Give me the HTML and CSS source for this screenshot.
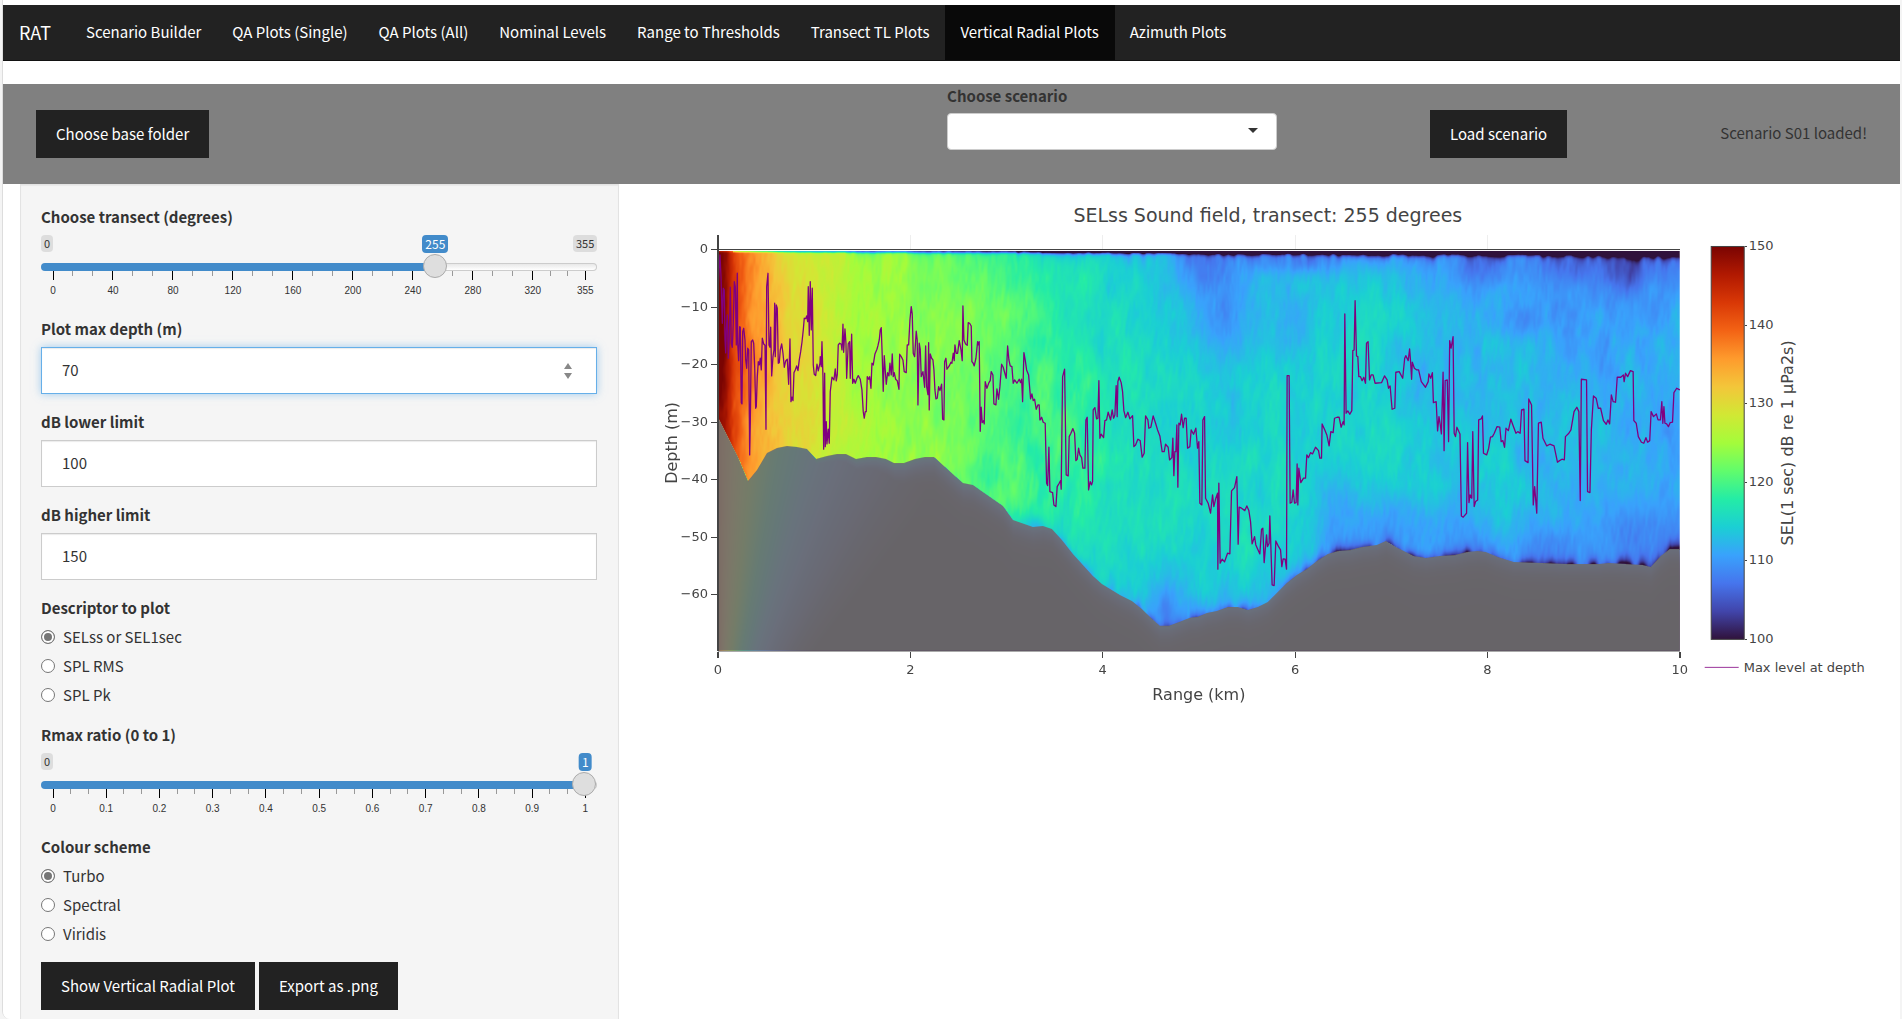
FILE: index.html
```html
<!DOCTYPE html>
<html lang="en">
<head>
    <meta charset="UTF-8">
    <meta name="viewport" content="width=device-width, initial-scale=1.0">
    <title>RAT</title>
    <link rel="stylesheet" href="styles.css">
</head>
<body>
    <div class="page">
        <div class="strip"><span>page</span></div>

        <nav class="navbar">
            <a class="brand" href="#">RAT</a>
            <a href="#">Scenario Builder</a>
            <a href="#">QA Plots (Single)</a>
            <a href="#">QA Plots (All)</a>
            <a href="#">Nominal Levels</a>
            <a href="#">Range to Thresholds</a>
            <a href="#">Transect TL Plots</a>
            <a class="active" href="#">Vertical Radial Plots</a>
            <a href="#">Azimuth Plots</a>
        </nav>

        <div class="bar">
            <button class="btn" type="button">Choose base folder</button>
            <div class="bar-field">
                <label for="scenario">Choose scenario</label>
                <div class="select-wrap">
                    <select id="scenario"><option value=""></option></select>
                </div>
            </div>
            <button class="btn" type="button">Load scenario</button>
            <span class="status">Scenario S01 loaded!</span>
        </div>

        <div class="row">
            <form class="sidebar">
                <div class="group">
                    <label for="transect">Choose transect (degrees)</label>
                    <div class="slider" style="--pos: 0.7183">
                        <div class="badges"><span>0</span><span>355</span></div>
                        <output class="bubble" for="transect">255</output>
                        <input type="range" id="transect" min="0" max="355" step="5" value="255">
                        <svg class="ruler" data-ticks="0 40 80 120 160 200 240 280 320 355"></svg>
                    </div>
                </div>

                <div class="group">
                    <label for="depth">Plot max depth (m)</label>
                    <div class="number-wrap">
                        <input class="focused" type="number" id="depth" value="70">
                        <svg class="spinner" width="8" height="16" viewBox="0 0 8 16">
                            <path d="M4 0 L8 6 H0 Z M0 10 H8 L4 16 Z" fill="#888"/>
                        </svg>
                    </div>
                </div>

                <div class="group">
                    <label for="dbLow">dB lower limit</label>
                    <input type="number" id="dbLow" value="100">
                </div>

                <div class="group">
                    <label for="dbHigh">dB higher limit</label>
                    <input type="number" id="dbHigh" value="150">
                </div>

                <fieldset>
                    <legend>Descriptor to plot</legend>
                    <label class="radio"><input type="radio" name="descriptor" checked> SELss or SEL1sec</label>
                    <label class="radio"><input type="radio" name="descriptor"> SPL RMS</label>
                    <label class="radio"><input type="radio" name="descriptor"> SPL Pk</label>
                </fieldset>

                <div class="group">
                    <label for="rmax">Rmax ratio (0 to 1)</label>
                    <div class="slider" style="--pos: 1">
                        <div class="badges"><span>0</span></div>
                        <output class="bubble" for="rmax">1</output>
                        <input type="range" id="rmax" min="0" max="1" step="0.1" value="1">
                        <svg class="ruler" data-ticks="0 0.1 0.2 0.3 0.4 0.5 0.6 0.7 0.8 0.9 1"></svg>
                    </div>
                </div>

                <fieldset>
                    <legend>Colour scheme</legend>
                    <label class="radio"><input type="radio" name="scheme" checked> Turbo</label>
                    <label class="radio"><input type="radio" name="scheme"> Spectral</label>
                    <label class="radio"><input type="radio" name="scheme"> Viridis</label>
                </fieldset>

                <div class="actions">
                    <button class="btn" type="button">Show Vertical Radial Plot</button>
                    <button class="btn" type="button">Export as .png</button>
                </div>
            </form>

            <main class="plot">
                <svg id="chart" viewBox="0 0 1231 540">
                    <defs>
                        <linearGradient id="turbo" x1="0" y1="1" x2="0" y2="0"></linearGradient>
                    </defs>
                    <text class="title" x="616" y="38" text-anchor="middle">SELss Sound field, transect: 255 degrees</text>
                    <g id="grid"></g>
                    <foreignObject x="66" y="67" width="962" height="400">
                        <canvas id="field" width="962" height="400"></canvas>
                    </foreignObject>
                    <path id="seabed" fill="#6e6e6e" fill-opacity="0.9"/>
                    <path id="maxLevel"/>
                    <g id="axes"></g>
                    <text class="axis-title" x="547" y="516" text-anchor="middle">Range (km)</text>
                    <text class="axis-title" transform="translate(25 259) rotate(-90)" text-anchor="middle">Depth (m)</text>
                    <rect x="1059.5" y="62.5" width="33" height="393" fill="url(#turbo)" stroke="#444"/>
                    <g id="barTicks"></g>
                    <text class="axis-title" transform="translate(1141 259) rotate(-90)" text-anchor="middle">SEL(1 sec) dB re 1 µPa2s)</text>
                    <path d="M1053 483.5 H1087" stroke="#800080" stroke-opacity="0.8"/>
                    <text class="tick" x="1092" y="488">Max level at depth</text>
                </svg>
            </main>
        </div>
    </div>

    <script src="plot.js"></script>
</body>
</html>
```

FILE: styles.css
```css
* {
    box-sizing: border-box;
}

body {
    margin: 0;
    background-color: #f4f4f4;
    font-family: "Noto Sans CJK SC", "Noto Sans", sans-serif;
    font-size: 15px;
    line-height: 24px;
    color: #333;
}

.page {
    height: 100vh;
    margin: 0 2px;
    border-left: 1px solid #ddd;
    border-bottom-left-radius: 8px;
    background-color: #fff;
    overflow-y: auto;
    scrollbar-width: none;
}

.strip {
    display: flex;
    align-items: flex-end;
    height: 5px;
    padding: 0 40px 3px;
    overflow: hidden;
}

/* top navigation */
.navbar {
    display: flex;
    height: 56px;
    padding-left: 1px;
    background-color: #222;
    border-bottom: 1px solid #121212;
}

.navbar a {
    padding: 0 16px 0 15px;
    line-height: 54px;
    color: #fff;
    text-decoration: none;
    white-space: nowrap;
}

.navbar .brand {
    font-size: 18px;
    padding-right: 20px;
}

.navbar .active {
    background-color: #090909;
}

/* scenario bar */
.bar {
    display: flex;
    align-items: center;
    gap: 153px;
    height: 100px;
    margin-top: 23px;
    padding: 0 33px;
    background-color: #808080;
}

.bar-field {
    align-self: flex-start;
    width: 330px;
    margin-left: auto;
}

.status {
    padding-bottom: 2px;
    white-space: nowrap;
}

label,
legend {
    display: block;
    padding: 0;
    font-weight: 700;
}

.btn {
    height: 48px;
    padding: 0 20px 2px;
    border: 0;
    background-color: #222;
    color: #fff;
    font-family: inherit;
    font-size: 15px;
    white-space: nowrap;
}

.select-wrap {
    position: relative;
    margin-top: 5px;
}

.select-wrap::after {
    content: "";
    position: absolute;
    right: 19px;
    top: 15px;
    border: 5px solid transparent;
    border-top-color: #333;
    border-bottom: 0;
    pointer-events: none;
}

select {
    display: block;
    width: 100%;
    height: 37px;
    border: 1px solid #ccc;
    border-radius: 4px;
    background-color: #fff;
    appearance: none;
}

/* main row */
.row {
    display: grid;
    grid-template-columns: 1fr 2fr;
    align-items: start;
}

.sidebar {
    margin: 0 16px 0 17px;
    padding: 20px 21px 20px 20px;
    border: 1px solid #e3e3e3;
    background-color: #f5f5f5;
    box-shadow: inset 0 1px 1px rgba(0, 0, 0, 0.05);
}

.group {
    margin-bottom: 16px;
}

fieldset {
    margin: 0 0 16px;
    padding: 0;
    border: 0;
}

input[type="number"] {
    display: block;
    width: 100%;
    height: 47px;
    margin-top: 6px;
    padding: 0 20px 2px;
    border: 1px solid #ccc;
    background-color: #fff;
    box-shadow: inset 0 1px 1px rgba(0, 0, 0, 0.08);
    color: #333;
    font-family: inherit;
    font-size: 15px;
    appearance: textfield;
}

input[type="number"].focused {
    border-color: #66afe9;
    box-shadow: inset 0 1px 1px rgba(0, 0, 0, 0.08), 0 0 8px rgba(102, 175, 233, 0.6);
}

.number-wrap {
    position: relative;
}

.spinner {
    position: absolute;
    right: 25px;
    top: 16px;
}

.radio {
    display: flex;
    align-items: center;
    gap: 8px;
    margin-top: 5px;
    font-weight: 400;
}

.radio input {
    width: 14px;
    height: 14px;
    margin: 0;
    border: 1px solid #767676;
    border-radius: 50%;
    background-color: #fff;
    appearance: none;
}

.radio input:checked {
    background-color: #767676;
    box-shadow: inset 0 0 0 2px #fff;
}

.actions {
    display: flex;
    gap: 4px;
}

/* sliders */
.slider {
    position: relative;
    margin-top: 6px;
}

.badges {
    display: flex;
    justify-content: space-between;
    height: 17px;
}

.badges span {
    padding: 0 3px;
    border-radius: 4px;
    background-color: #ddd;
    font-size: 11px;
    line-height: 16px;
}

.bubble {
    position: absolute;
    top: 0;
    left: calc(12px + (100% - 24px) * var(--pos));
    padding: 0 3px;
    border-radius: 4px;
    background-color: #428bca;
    color: #fff;
    font-size: 12px;
    line-height: 18px;
    transform: translateX(-50%);
}

input[type="range"] {
    position: relative;
    z-index: 1;
    display: block;
    width: 100%;
    height: 24px;
    margin: 3px 0 0;
    background: none;
    appearance: none;
}

input[type="range"]::-webkit-slider-runnable-track {
    height: 8px;
    border: 1px solid transparent;
    border-radius: 8px;
    background:
        linear-gradient(#428bca, #428bca) 0 0 / calc(12px + (100% - 24px) * var(--pos)) 100% no-repeat border-box,
        linear-gradient(#e8e8e8, #fff) padding-box,
        linear-gradient(#ccc, #ccc) border-box;
}

input[type="range"]::-webkit-slider-thumb {
    width: 24px;
    height: 24px;
    margin-top: -10px;
    border: 1px solid #ababab;
    border-radius: 50%;
    background-color: #dedede;
    appearance: none;
}

.ruler {
    display: block;
    width: calc(100% - 24px);
    height: 30px;
    margin: -8px 12px 0;
    overflow: visible;
    font-family: "Liberation Sans", Arial, sans-serif;
    font-size: 10px;
}

/* plot */
.plot {
    padding: 0 17px;
    min-width: 0;
}

#chart {
    display: block;
    width: 100%;
    font-family: "DejaVu Sans", Verdana, sans-serif;
    fill: #444;
}

#field {
    display: block;
}

#maxLevel {
    fill: none;
    stroke: #800080;
    stroke-width: 1.3;
    stroke-linejoin: round;
}

.title {
    font-size: 19px;
}

.axis-title {
    font-size: 16px;
}

.tick {
    font-size: 13px;
}

#grid,
#axes,
#barTicks,
.ruler {
    shape-rendering: crispEdges;
}
```

FILE: plot.js
```js
const NS = "http://www.w3.org/2000/svg";

function add(parent, name, attrs, text) {
    const el = document.createElementNS(NS, name);
    for (const key in attrs) {
        el.setAttribute(key, attrs[key]);
    }
    if (text !== undefined) {
        el.textContent = text;
    }
    parent.appendChild(el);
}

function line(parent, x1, y1, x2, y2, color, width) {
    add(parent, "line", { x1, y1, x2, y2, stroke: color, "stroke-width": width || 1 });
}

// slider rulers: a long tick per label, two short ones in between
document.querySelectorAll(".ruler").forEach(function (ruler) {
    const ticks = ruler.dataset.ticks.split(" ").map(Number);
    const max = ticks[ticks.length - 1];
    ticks.forEach(function (t, i) {
        const x = t / max * 100;
        line(ruler, x + "%", 0, x + "%", 9, "#000");
        add(ruler, "text", { x: x + "%", y: 23, "text-anchor": "middle", fill: "#333" }, t);
        if (i < ticks.length - 1) {
            const step = (ticks[i + 1] - t) / max * 100 / 3;
            for (let k = 1; k < 3; k++) {
                const sx = x + step * k + "%";
                line(ruler, sx, 0, sx, 5, "#999");
            }
        }
    });
});

// plot scales
const LEFT = 66, RIGHT = 1028, TOP = 51, BOTTOM = 467, ZERO = 65.5;
const KM = 96.2, METRE = 5.75;

const stops = [
    "30123b", "4145ab", "4675ed", "39a2fc", "1bcfd4", "24eca6", "61fc6c", "a4fc3b",
    "d1e834", "f3c63a", "fe9b2d", "f36315", "d93806", "b11901", "7a0402"
].map((hex) => [0, 2, 4].map((i) => parseInt(hex.substr(i, 2), 16)));

function turbo(t) {
    const pos = Math.max(0, Math.min(0.9999, t)) * (stops.length - 1);
    const i = Math.floor(pos), f = pos - i;
    return stops[i].map((c, k) => Math.round(c + (stops[i + 1][k] - c) * f));
}

const gradient = document.getElementById("turbo");
stops.forEach(function (c, i) {
    add(gradient, "stop", { offset: i / (stops.length - 1), "stop-color": `rgb(${c})` });
});

// seabed profile, chart coordinates
const bed = [
    [66, 233], [86, 273], [96, 297], [105, 286], [115, 269], [125, 264], [135, 262], [145, 263],
    [155, 265], [164, 275], [175, 272], [185, 270], [194, 270], [204, 275], [215, 273], [224, 273],
    [234, 275], [242, 279], [252, 279], [263, 275], [273, 273], [282, 273], [292, 282], [303, 292],
    [311, 299], [321, 301], [328, 306], [351, 322], [361, 336], [381, 343], [391, 342], [400, 345],
    [410, 356], [421, 370], [431, 381], [441, 392], [450, 400], [468, 411], [480, 417], [490, 425],
    [500, 435], [508, 442], [517, 442], [528, 438], [538, 434], [546, 433], [555, 429], [565, 427],
    [576, 423], [586, 423], [596, 426], [606, 423], [616, 418], [625, 409], [635, 399], [645, 391],
    [655, 385], [665, 377], [676, 370], [686, 367], [698, 366], [710, 363], [725, 361], [734, 357],
    [746, 364], [762, 372], [774, 374], [788, 372], [803, 371], [815, 368], [826, 367], [834, 368],
    [846, 373], [862, 378], [891, 379], [915, 380], [947, 380], [957, 379], [991, 381], [999, 383],
    [1009, 372], [1018, 365], [1028, 365]
];
document.getElementById("seabed").setAttribute("d",
    "M" + bed.map((p) => p.join(" ")).join("L") + `L${RIGHT} ${BOTTOM}L${LEFT} ${BOTTOM}Z`);

function lookup(points, x) {
    for (let i = 1; i < points.length; i++) {
        if (x <= points[i][0]) {
            const a = points[i - 1], b = points[i];
            return a[1] + (b[1] - a[1]) * (x - a[0]) / (b[0] - a[0]);
        }
    }
    return points[points.length - 1][1];
}

// smooth value noise
function hash(x, y) {
    let h = Math.imul(x, 374761393) + Math.imul(y, 668265263) | 0;
    h = Math.imul(h ^ (h >>> 13), 1274126177);
    return ((h ^ (h >>> 16)) >>> 0) / 4294967296 - 0.5;
}

function noise(x, y) {
    const xi = Math.floor(x), yi = Math.floor(y);
    let u = x - xi, v = y - yi;
    u = u * u * (3 - 2 * u);
    v = v * v * (3 - 2 * v);
    const top = hash(xi, yi) * (1 - u) + hash(xi + 1, yi) * u;
    const bottom = hash(xi, yi + 1) * (1 - u) + hash(xi + 1, yi + 1) * u;
    return top * (1 - v) + bottom * v;
}

// level by range in km, dB
const levels = [
    [0, 151], [0.08, 148], [0.16, 142], [0.3, 137.5], [0.5, 134], [0.7, 131.5], [0.9, 129.5],
    [1.1, 127.5], [1.4, 126.2], [1.8, 124.8], [2.2, 123.5], [2.7, 121.8], [3.1, 119.8], [3.5, 118.3],
    [4, 117], [4.5, 116], [5, 115], [6, 115], [6.8, 115], [7.3, 114], [8, 113.2], [9, 112.4], [10, 112]
];

// local patches: km, depth, km radius, depth radius, dB
const patches = [
    [5, 3, 0.35, 4, -3.5], [5.2, 8, 0.3, 9, -3], [5.3, 14, 0.5, 6, -1.2], [6, 13, 0.25, 6, -1.6], [6, 2, 0.4, 2, -3.5],
    [7.9, 3, 0.25, 4, -4], [8.35, 12, 0.25, 3, -3], [9, 3, 0.5, 3, -2.5], [9.45, 4, 0.2, 4, -4.5],
    [6.8, 10, 0.4, 10, 1], [4.65, 62, 0.2, 5, -5], [4.6, 56, 0.3, 4, -1.5], [7, 48, 0.7, 5, -3],
    [6.5, 44, 0.25, 7, -1.8], [9.5, 49, 0.4, 5, -2.5], [3.6, 28, 0.5, 12, 0.8], [3.2, 42, 0.25, 6, 1.5],
    [2.8, 39, 0.15, 3, -3], [3.25, 48, 0.12, 2, -4], [8.6, 51, 0.4, 3, -2.5], [8, 38, 0.5, 9, 1]
];

function level(km, depth, bedDepth, x, y) {
    let v = lookup(levels, km);
    if (depth > bedDepth) {
        const reach = 0.32 + (70 - depth) * 0.015;
        const spread = 42 * Math.exp(-km / reach) - 2;
        const edge = (v - 100) * 0.6 * Math.exp(-(depth - bedDepth) / 1.5);
        return 100 + Math.max(spread, edge);
    }
    const far = Math.min(1, Math.max(0, (km - 3) / 3));
    const slant = x + y * 0.15;
    const wide = noise(x / 34, y / 60 + 9);
    const mid = noise(slant / 9, y / 34) + noise((x - y * 0.2) / 11 + 50, y / 30);
    const fine = noise(slant / 3 + 90, y / 13) + noise(x / 2 + 300, y / 9);
    v += wide * 2.2 + mid * 1.6 + fine * 1;
    v -= far * 3.2 * Math.exp(-depth / 15);
    // loss under the surface
    const ragged = Math.max(0.1, 1 + 1.6 * (noise(x / 5, 3) + noise(x / 17, 7)));
    const skin = 0.12 + 0.065 * km * (0.7 + 0.3 * ragged);
    const below = Math.max(0, depth - 0.3);
    v -= (12 + km * 1.2) * Math.exp(-Math.pow(below / skin, 1.5)) * (km < 0.15 ? 0.3 : 1);
    v -= 5 * Math.min(1, km / 3) * ragged * Math.exp(-depth / (0.8 + 0.1 * km));
    // loss over the seabed
    const gap = bedDepth - depth;
    const rough = 1 + noise(x / 7, 20) * 1.8;
    if (km > 2.2) {
        const k = Math.min(1, (km - 2.2) / 3);
        v -= k * (3.5 * Math.exp(-gap / 4.5) + (2.5 + km * 0.45) * rough * Math.exp(-gap / 0.9));
    }
    for (const p of patches) {
        const a = (km - p[0]) / p[2], b = (depth - p[1]) / p[3];
        const r = a * a + b * b;
        if (r < 6) {
            v += p[4] * Math.exp(-r) * (1 + mid * 0.8);
        }
    }
    return v;
}

const canvas = document.getElementById("field");
const ctx = canvas.getContext("2d");
const image = ctx.createImageData(canvas.width, canvas.height);
for (let x = 0; x < canvas.width; x++) {
    const km = x / KM;
    const bedDepth = (lookup(bed, x + LEFT) - ZERO) / METRE;
    for (let y = 0; y < canvas.height; y++) {
        const depth = (y + 1.5) / METRE;
        const rgb = turbo((level(km, depth, bedDepth, x, y) - 100) / 50);
        image.data.set([...rgb, 255], (y * canvas.width + x) * 4);
    }
}
ctx.putImageData(image, 0, 0);

const runs = [
    [-12, 3, "234,300 238,230 240,195 243,260 247,400 250,295 253,300 255,450 257,489 259,420 262,375 265,505 268,440 271,292 274,460 277,472 280,400 283,275 286,290 289,465 292,250 293,460 296,512 299,410 301,412 304,638 306,642 308,425 311,415 315,450 317,510 320,535 323,475 326,480 329,795 331,700 334,455 338,450 341,460 344,530 347,655 349,650 352,560 355,515 358,525 361,505 364,540 367,445 371,462 375,466 378,718 380,290 384,250 387,465 390,472 392,412 395,558 399,500 402,480 404,340 406,500 409,345 412,355 415,520 418,518 421,480 425,462 429,490 433,532 437,513 442,508 446,583 450,447 453,635 456,622 459,632 462,548 466,540 470,528 474,542 478,510 482,485 486,457 490,420 493,385 497,386 500,378 503,395 505,290 508,436 511,275 514,420 517,295 520,525 523,553 527,557 531,523 535,543 540,520 541,500 544,530 546,455 549,560 551,778 554,550 556,770 559,695 561,762 565,718 568,760 571,605 576,562 582,570 586,537 589,573 592,555 595,465 599,460 604,463 606,480 609,403 611,487 615,417 618,460 620,565 625,462 629,455 631,565 635,433 638,580 642,568 646,580 651,565 655,557 661,568 666,600 670,665 673,685 676,665 679,665 682,560 686,568 689,560 693,595 696,520 700,525 705,492 711,478 714,467 718,450 721,420 724,413 727,500 730,604 733,497 739,583 743,548 747,558 750,520 754,555 757,492 760,560 763,548 767,568 772,572 777,598 779,493 784,500 789,510 793,545 799,548 802,465 806,465 810,390 814,350 817,372 820,490 824,500 829,424 832,450 834,645 838,460 841,478 844,560 849,545 854,592 857,468 860,590 864,614 866,458 868,660 871,492 875,505 879,510 882,540 885,600 888,627 892,625 896,590 900,602 905,583 908,688 912,690 914,515 918,505 921,538 928,528 933,517 936,520 940,490 943,512 945,465 949,490 953,490 958,452 963,478 967,512 969,348 972,450 977,462 982,466 985,398 989,400 994,408 996,515 1000,520 1003,528 1008,505 1013,455 1015,465 1018,455 1021,724 1024,652 1027,698 1031,692 1033,702 1036,575 1041,595 1047,578 1051,572 1054,545 1059,555 1062,642 1068,645 1071,597 1076,628 1080,590 1085,523 1090,532 1099,565 1103,468 1107,510 1111,528 1116,530 1120,580 1124,570 1131,580 1138,568 1142,578 1145,568 1148,635 1152,488 1156,510 1160,540 1166,555 1172,627 1176,612 1180,632 1184,628 1189,658 1194,645 1198,645 1200,690"],
    [348, 3, "121,690 125,682 130,697 136,700 140,880 143,887 147,772 150,905 158,908 162,945 168,950 172,890 178,880 182,872 184,898 188,560 194,538 199,855 205,858 208,740 213,730 219,716 224,730 228,812 232,808 236,775 240,795 245,803 249,835 255,835 258,690 262,682 266,900 271,875 275,885 278,875 280,660 285,653 290,687 294,685 297,572 300,745 304,733 311,743 315,692 320,690 325,667 332,690 337,660 341,685 345,675 349,587 352,680 354,575 358,562 364,578 368,605 372,662 377,683 384,667 390,687 398,677 402,770 407,765 414,748 421,752 427,802 433,790 437,678 444,690 447,715 453,712 460,678 467,700 473,720 480,738 487,785 493,785 497,763 505,772 509,810 516,803 519,745 522,857 525,785 528,785 531,705 534,892 537,700 541,705 545,673 550,713 554,685 559,685 563,775 570,770 574,720 581,733 588,715 593,775 597,755 600,940 606,945 609,690 614,680 617,925 625,940 632,970 638,915 642,950 648,925 653,910 654,1138 657,880 661,1120 667,1108 674,1116 683,1090 690,1092 695,903 704,893 711,860 715,1063 718,952 725,955 735,962 741,948 747,962 752,995 757,1062 764,1040 768,1065 780,1092 785,1018 789,1015 793,1118 800,1035 803,1070 808,1060 810,978 817,1185 823,1187 828,1053 835,1068 842,1080 846,1130 850,1107 856,1108 860,1138 862,557 868,557 871,940 876,937 880,900 884,940 889,938 892,822 894,945 897,835 903,878 911,865 917,865 921,795 926,803 932,788 938,792 947,772 956,782 960,805 965,805 967,702 975,720 981,735 988,768 993,725 1000,728 1004,685 1012,682 1018,682 1024,712 1030,695 1033,705 1035,372 1039,670 1044,663 1050,673 1056,662 1059,482 1063,480 1066,332 1070,498 1074,500 1077,560 1082,560 1087,572 1092,562 1097,580 1100,460 1105,455 1109,570 1114,555 1120,555 1126,580 1145,578 1154,558 1162,570 1166,595 1171,588 1177,658 1185,655 1188,547"],
    [708, 2.893, "105,547 114,545 124,565 130,505 133,497 140,512 144,477 147,515 150,568 152,517 158,535 165,540 170,540 178,575 190,592 198,575 200,552 205,565 210,548 213,638 221,635 225,723 229,680 233,705 236,732 241,547 244,782 247,572 253,570 257,755 260,452 264,475 270,440 273,730 277,740 281,712 290,732 294,978 299,982 309,970 312,758 316,938 319,915 324,925 327,725 331,950 335,935 341,930 344,690 351,687 355,678 358,790 367,795 373,775 378,742 384,740 389,730 397,710 405,712 409,755 414,752 419,772 423,715 430,722 437,688 443,705 452,730 457,725 464,730 468,660 475,658 478,812 487,818 489,627 497,645 502,945 506,890 512,970 517,700 525,697 530,745 541,768 550,763 562,768 572,817 578,812 585,808 592,810 595,740 605,730 611,720 620,665 628,652 634,665 638,932 641,568 656,570 659,905 666,908 670,720 676,618 684,625 690,655 697,655 705,692 713,703 718,690 723,702 728,615 733,635 740,637 745,562 755,562 763,555 765,575 769,550 775,560 783,542 791,545 793,692 800,700 806,740 815,757 822,760 828,743 833,757 839,752 843,665 850,680 858,672 863,690 870,690 874,635 877,700 880,650 883,700 888,702 893,710 898,698 905,697 909,608 917,595 926,600"]
];
const track = [];
runs.forEach(function ([origin, scale, samples]) {
    samples.split(" ").forEach(function (s) {
        const [x, y] = s.split(",");
        track.push((origin + x / scale).toFixed(1) + " " + (y / 3 + 6).toFixed(1));
    });
});
document.getElementById("maxLevel").setAttribute("d", "M" + track.join("L"));

// axes
const grid = document.getElementById("grid");
const axes = document.getElementById("axes");
line(axes, LEFT, TOP, LEFT, BOTTOM, "#444", 2);
line(axes, LEFT, ZERO, RIGHT, ZERO, "#444");
line(axes, LEFT, BOTTOM + 0.5, RIGHT, BOTTOM + 0.5, "#aaa");
for (let km = 0; km <= 10; km += 2) {
    const x = Math.floor(LEFT + km * KM) + 0.5;
    const end = km === 0 || km === 10;
    if (!end) {
        line(grid, x, TOP, x, ZERO, "#eee");
    }
    line(axes, end ? Math.floor(x) : x, BOTTOM + 1, end ? Math.floor(x) : x, BOTTOM + 7, "#444", end ? 2 : 1);
    add(axes, "text", { class: "tick", x: LEFT + km * KM, y: 490, "text-anchor": "middle" }, km);
}
for (let d = 0; d <= 60; d += 10) {
    const y = Math.floor(ZERO + d * METRE) + 0.5;
    line(axes, LEFT - 7, y, LEFT, y, "#444");
    add(axes, "text", { class: "tick", x: LEFT - 10, y: y + 4, "text-anchor": "end" }, d ? "−" + d : 0);
}

const barTicks = document.getElementById("barTicks");
for (let db = 100; db <= 150; db += 10) {
    const y = Math.round(455 - (db - 100) * 7.86) + 0.5;
    line(barTicks, 1093, y, 1095, y, "#444");
    add(barTicks, "text", { class: "tick", x: 1097, y: y + 4 }, db);
}
```
